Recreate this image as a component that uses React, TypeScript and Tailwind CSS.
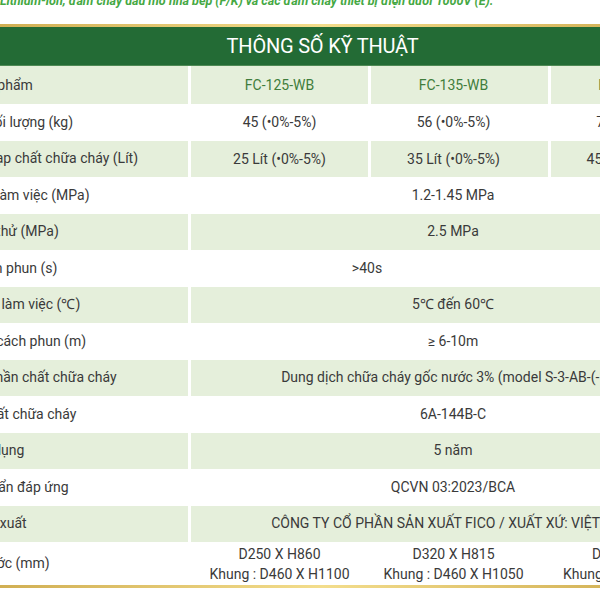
type Row = {
  label: string;
  values?: string[];
  merged?: string;
  mergedClass?: string;
  head?: boolean;
  tall?: boolean;
};

const rows: Row[] = [
  { label: "Tên sản phẩm", values: ["FC-125-WB", "FC-135-WB", "FC-145-WB"], head: true },
  { label: "Tổng khối lượng (kg)", values: ["45 (•0%-5%)", "56 (•0%-5%)", "75 (•0%-5%)"] },
  { label: "Lượng nạp chất chữa cháy (Lít)", values: ["25 Lít (•0%-5%)", "35 Lít (•0%-5%)", "45 Lít (•0%-5%)"] },
  { label: "Áp suất làm việc (MPa)", merged: "1.2-1.45 MPa" },
  { label: "Áp suất thử (MPa)", merged: "2.5 MPa" },
  { label: "Thời gian phun (s)", merged: ">40s", mergedClass: "pr-[172px]" },
  { label: "Nhiệt độ làm việc (℃)", merged: "5℃ đến 60℃" },
  { label: "Khoảng cách phun (m)", merged: "≥ 6-10m" },
  { label: "Thành phần chất chữa cháy", merged: "Dung dịch chữa cháy gốc nước 3% (model S-3-AB-(-10))" },
  { label: "Hạng chất chữa cháy", merged: "6A-144B-C" },
  { label: "Hạn sử dụng", merged: "5 năm" },
  { label: "Tiêu chuẩn đáp ứng", merged: "QCVN 03:2023/BCA" },
  { label: "Nhà sản xuất", merged: "CÔNG TY CỔ PHẦN SẢN XUẤT FICO / XUẤT XỨ: VIỆT NAM" },
  {
    label: "Kích thước (mm)",
    values: ["D250 X H860\nKhung : D460 X H1100", "D320 X H815\nKhung : D460 X H1050", "D360 X H870\nKhung : D460 X H1150"],
    tall: true,
  },
];

// third value column reads a little left of centre in the source
const colWidths = ["w-[177px]", "w-[177px] pr-[12px]", "w-[164px]"];

export default function App() {
  return (
    <div className="w-[600px] h-[600px] overflow-hidden bg-white font-['Roboto','Liberation_Sans',sans-serif] text-[14px] text-[#3a3a3a]">
      {/* intro line, mostly scrolled off */}
      <p className="-mt-[8px] -ml-[20px] whitespace-nowrap text-[12.5px] leading-[18px] font-bold italic text-[#45a843]">
        pin Lithium-ion, đám cháy dầu mỡ nhà bếp (F/K) và các đám cháy thiết bị điện dưới 1000V (E).
      </p>

      <div className="mt-[14px] -ml-[70px] w-[785px]">
        <div className="h-[3px] bg-gradient-to-r from-[#c9a545] via-[#f3dd8c] to-[#c9a545]" />
        <div className="h-[38px] bg-[#236b35] flex items-center justify-center text-white text-[20px] tracking-[-0.2px]">
          THÔNG SỐ KỸ THUẬT
        </div>
        <div className="h-px bg-[#4f8a55]" />

        <div className="flex flex-col">
          {rows.map((row, i) => {
            const green = i % 2 === 0;
            const cell = green ? "bg-[#e5efdb]" : "bg-white";
            return (
              <div key={row.label} className={`flex gap-[3px] ${row.tall ? "h-[43px]" : i === 0 ? "h-[38px]" : "h-[36.5px]"}`}>
                <div className={`w-[258px] shrink-0 flex items-center pl-[15px] whitespace-nowrap ${cell}`}>{row.label}</div>
                {row.merged ? (
                  <div className={`flex-1 flex items-center justify-center whitespace-nowrap ${cell} ${row.mergedClass ?? ""}`}>
                    {row.merged}
                  </div>
                ) : (
                  row.values?.map((v, j) => (
                    <div
                      key={j}
                      className={`${colWidths[j]} shrink-0 flex flex-col items-center justify-center text-center whitespace-pre leading-[20px] ${cell} ${row.head ? "text-[#3f7d3c]" : ""}`}
                    >
                      {v}
                    </div>
                  ))
                )}
              </div>
            );
          })}
        </div>

        <div className="h-[3px] bg-gradient-to-r from-[#c9a545] via-[#f3dd8c] to-[#c9a545]" />
        <div className="h-[12px] bg-white" />
        <div className="h-px bg-[#eadfae]" />
      </div>
    </div>
  );
}
